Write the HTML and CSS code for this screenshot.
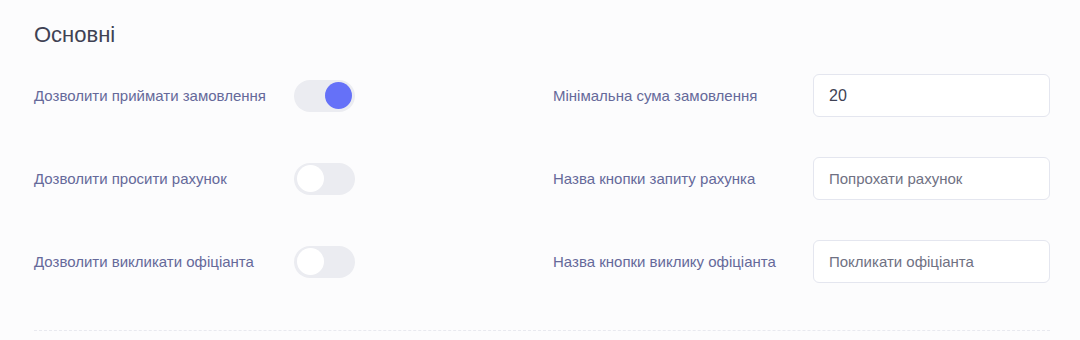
FILE: index.html
```html
<!DOCTYPE html>
<html lang="uk">
<head>
<meta charset="utf-8">
<link rel="stylesheet" href="styles.css">
</head>
<body>
<section class="panel">
  <h2 class="title">Основні</h2>
  <div class="rows">
    <div class="row">
      <div class="field">
        <span class="label">Дозволити приймати замовлення</span>
        <span class="switch on"><span class="knob"></span></span>
      </div>
      <div class="field">
        <span class="label">Мінімальна сума замовлення</span>
        <input class="input value" type="text" value="20">
      </div>
    </div>
    <div class="row">
      <div class="field">
        <span class="label">Дозволити просити рахунок</span>
        <span class="switch"><span class="knob"></span></span>
      </div>
      <div class="field">
        <span class="label">Назва кнопки запиту рахунка</span>
        <input class="input" type="text" placeholder="Попрохати рахунок">
      </div>
    </div>
    <div class="row">
      <div class="field">
        <span class="label">Дозволити викликати офіціанта</span>
        <span class="switch"><span class="knob"></span></span>
      </div>
      <div class="field">
        <span class="label">Назва кнопки виклику офіціанта</span>
        <input class="input" type="text" placeholder="Покликати офіціанта">
      </div>
    </div>
  </div>
  <div class="divider"></div>
</section>
</body>
</html>
```

FILE: styles.css
```css
html, body {
  margin: 0;
  padding: 0;
  background: #fcfcfd;
}
body {
  font-family: "Liberation Sans", Arial, sans-serif;
}
.panel {
  padding: 21px 30px 0 34px;
  width: 1016px;
}
.title {
  margin: 0;
  font-size: 22px;
  font-weight: 400;
  line-height: 28px;
  color: #3f4254;
}
.rows {
  display: flex;
  flex-direction: column;
  gap: 40px;
  margin-top: 25px;
}
.row {
  display: grid;
  grid-template-columns: 497px 497px;
  gap: 22px;
}
.field {
  display: flex;
  align-items: center;
  height: 43px;
  min-width: 0;
}
.label {
  width: 260px;
  flex: none;
  font-size: 15px;
  color: #65699a;
}
.switch {
  width: 61px;
  height: 32px;
  border-radius: 16px;
  background: #ebecf1;
  display: flex;
  align-items: center;
  padding: 0 3px;
  box-sizing: border-box;
}
.switch .knob {
  width: 27px;
  height: 27px;
  border-radius: 50%;
  background: #ffffff;
}
.switch.on {
  justify-content: flex-end;
}
.switch.on .knob {
  background: #6571f8;
}
.input {
  flex: 1 1 0;
  width: 0;
  height: 43px;
  box-sizing: border-box;
  border: 1px solid #e4e6ef;
  border-radius: 6px;
  background: #ffffff;
  padding: 0 15px;
  font-family: "Liberation Sans", Arial, sans-serif;
  font-size: 15px;
  color: #3f4254;
  outline: none;
  min-width: 0;
}
.input::placeholder {
  color: #6f7183;
  opacity: 1;
}
.input.value {
  font-size: 16px;
}
.divider {
  margin-top: 47px;
  border-top: 1px dashed #e8e9ef;
}
```
